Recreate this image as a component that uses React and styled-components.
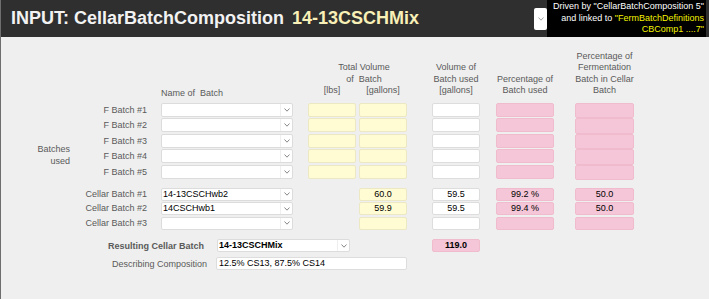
import React from "react";
import styled, { createGlobalStyle } from "styled-components";

const GlobalStyle = createGlobalStyle`
  html, body { margin: 0; padding: 0; background: #efefef; }
  body { font-family: "Liberation Sans", Arial, sans-serif; }
  * { box-sizing: border-box; }
`;

const Page = styled.div`
  width: 709px;
  height: 299px;
  border-left: 1px solid #6e6e6e;
  background: #efefef;
  overflow: hidden;
`;

const Header = styled.header`
  display: flex;
  align-items: center;
  height: 37px;
  background: #2f2f2f;
  padding-left: 10px;
`;

const Title = styled.h1`
  margin: 0;
  font-size: 18px;
  font-weight: bold;
  color: #f2f2f2;
  white-space: nowrap;
`;

const TitleValue = styled.span`
  margin-left: 8px;
  color: #f8f0b6;
`;

const HeaderSelect = styled.div`
  margin-left: auto;
  width: 13px;
  height: 22px;
  background: #fff;
  border-radius: 2px;
  display: flex;
  align-items: center;
  justify-content: center;
`;

const InfoBox = styled.div`
  align-self: stretch;
  width: 159px;
  margin-right: 3px;
  background: #000;
  color: #fff;
  font-size: 9px;
  line-height: 11.6px;
  text-align: right;
  padding: 1px 2px 0 0;
  white-space: nowrap;
`;

const Yellow = styled.span`
  color: #f4f400;
`;

const Body = styled.main`
  padding-top: 14px;
`;

const cols = `73px 146px 63px 51px 73px 74px 80px`;

const Section = styled.div`
  display: flex;
  margin-top: ${(p) => p.$mt || 0}px;
`;

const GroupLabel = styled.div`
  width: 73px;
  flex: none;
  padding-top: ${(p) => p.$pt || 0}px;
  padding-right: 4px;
  text-align: right;
  font-size: 9px;
  line-height: 11.7px;
  color: #5a5a5a;
`;

const Rows = styled.div`
  display: flex;
  flex-direction: column;
`;

const Row = styled.div`
  display: grid;
  grid-template-columns: ${cols};
  height: ${(p) => p.$h}px;
  align-items: start;
`;

const HeadRow = styled.div`
  display: grid;
  grid-template-columns: ${cols};
  height: 45.3px;
  align-items: end;
`;

const RowLabel = styled.div`
  grid-column: ${(p) => p.$col || 1};
  text-align: right;
  font-size: 9px;
  line-height: ${(p) => p.$lh}px;
  color: #5a5a5a;
  white-space: nowrap;
`;

const NameHead = styled.div`
  grid-column: 2;
  padding-left: 14px;
  margin-bottom: -3px;
  font-size: 9px;
  line-height: 11.3px;
  color: #5a5a5a;
  white-space: pre;
`;

const Head = styled.div`
  grid-column: ${(p) => p.$col};
  justify-self: end;
  width: ${(p) => p.$w}px;
  display: flex;
  flex-direction: column;
  align-items: center;
  font-size: 9px;
  line-height: 11.3px;
  color: #5a5a5a;
  white-space: pre;
`;

const TotalHead = styled.div`
  grid-column: 3 / span 2;
  display: grid;
  grid-template-columns: 63px 51px;
  font-size: 9px;
  line-height: 11.3px;
  color: #5a5a5a;
  white-space: pre;
`;

const TotalTop = styled.div`
  grid-column: 1 / span 2;
  padding-left: 28px;
  display: flex;
  flex-direction: column;
  align-items: center;
`;

const UnitHead = styled.div`
  justify-self: end;
  width: 48px;
  text-align: center;
`;

const SelectBox = styled.div`
  grid-column: ${(p) => p.$col || "auto"};
  justify-self: end;
  display: flex;
  width: ${(p) => p.$w}px;
  height: ${(p) => p.$h}px;
  background: #fff;
  border: 1px solid #dcdcdc;
  border-radius: 2px;
  flex: none;
`;

const SelectText = styled.div`
  flex: 1;
  padding-left: 1px;
  font-size: 9px;
  line-height: ${(p) => p.$h - 2}px;
  color: #000;
  font-weight: ${(p) => (p.$bold ? "bold" : "normal")};
  white-space: nowrap;
  overflow: hidden;
`;

const SelectButton = styled.div`
  width: 12px;
  border-left: 1px solid #efefef;
  display: flex;
  align-items: center;
  justify-content: center;
`;

const fills = {
  yellow: "#fffcd3",
  white: "#ffffff",
  pink: "#f5c6d7",
};

const Cell = styled.div`
  grid-column: ${(p) => p.$col || "auto"};
  justify-self: end;
  width: ${(p) => p.$w}px;
  height: ${(p) => p.$h}px;
  margin-left: ${(p) => p.$ml || 0}px;
  background: ${(p) => fills[p.$fill]};
  border: 1px solid ${(p) => (p.$fill === "pink" ? "#f0bccd" : p.$fill === "yellow" ? "#ece8c4" : "#dddddd")};
  border-radius: 2px;
  font-size: 9px;
  line-height: ${(p) => p.$h - 2}px;
  text-align: center;
  color: #000;
  font-weight: ${(p) => (p.$bold ? "bold" : "normal")};
  white-space: nowrap;
  flex: none;
`;

const LineRow = styled.div`
  display: flex;
  align-items: center;
  margin-top: ${(p) => p.$mt}px;
  height: 13px;
`;

const LineLabel = styled.div`
  width: 206px;
  flex: none;
  padding-right: ${(p) => p.$pr || 0}px;
  text-align: right;
  font-size: 9px;
  font-weight: ${(p) => (p.$bold ? "bold" : "normal")};
  color: #5a5a5a;
  white-space: nowrap;
`;

const TextInput = styled.div`
  margin-left: 9px;
  width: 191px;
  height: 13px;
  background: #fff;
  border: 1px solid #dddddd;
  border-radius: 2px;
  padding-left: 2px;
  font-size: 9px;
  line-height: 11px;
  color: #000;
  white-space: nowrap;
`;

const Chevron = ({ color = "#7a7a7a" }) => (
  <svg width="6" height="4" viewBox="0 0 6 4">
    <polyline points="0.5,0.5 3,3.2 5.5,0.5" fill="none" stroke={color} strokeWidth="0.9" />
  </svg>
);

const Select = ({ value = "", w, h, col, bold }) => (
  <SelectBox $w={w} $h={h} $col={col}>
    <SelectText $h={h} $bold={bold}>{value}</SelectText>
    <SelectButton>
      <Chevron />
    </SelectButton>
  </SelectBox>
);

const fRows = ["F Batch #1", "F Batch #2", "F Batch #3", "F Batch #4", "F Batch #5"];
const cellarRows = [
  { label: "Cellar Batch #1", name: "14-13CSCHwb2", gal: "60.0", used: "59.5", pct: "99.2 %", ferm: "50.0" },
  { label: "Cellar Batch #2", name: "14CSCHwb1", gal: "59.9", used: "59.5", pct: "99.4 %", ferm: "50.0" },
  { label: "Cellar Batch #3", name: "", gal: "", used: "", pct: "", ferm: "" },
];

export default function App() {
  return (
    <>
      <GlobalStyle />
      <Page>
        <Header>
          <Title>
            INPUT: CellarBatchComposition<TitleValue>14-13CSCHMix</TitleValue>
          </Title>
          <HeaderSelect>
            <Chevron color="#9a9a9a" />
          </HeaderSelect>
          <InfoBox>
            <div>Driven by "CellarBatchComposition 5"</div>
            <div>
              and linked to <Yellow>"FermBatchDefinitions</Yellow>
            </div>
            <div>
              <Yellow>CBComp1 ....7"</Yellow>
            </div>
          </InfoBox>
        </Header>
        <Body>
          <Section>
            <GroupLabel />
            <HeadRow>
              <NameHead>Name of  Batch</NameHead>
              <TotalHead>
                <TotalTop>
                  <span>Total Volume</span>
                  <span>of  Batch</span>
                </TotalTop>
                <UnitHead>[lbs]</UnitHead>
                <UnitHead>[gallons]</UnitHead>
              </TotalHead>
              <Head $col={5} $w={48}>
                <span>Volume of</span>
                <span>Batch used</span>
                <span>[gallons]</span>
              </Head>
              <Head $col={6} $w={58}>
                <span>Percentage of</span>
                <span>Batch used</span>
              </Head>
              <Head $col={7} $w={59}>
                <span>Percentage of</span>
                <span>Fermentation</span>
                <span>Batch in Cellar</span>
                <span>Batch</span>
              </Head>
            </HeadRow>
          </Section>

          <Section $mt={6.4}>
            <GroupLabel $pt={41.5}>
              Batches
              <br />
              used
            </GroupLabel>
            <Rows>
              {fRows.map((label) => (
                <Row key={label} $h={15.5}>
                  <RowLabel $lh={14}>{label}</RowLabel>
                  <Select w={132} h={14} />
                  <Cell $fill="yellow" $w={48} $h={14} />
                  <Cell $fill="yellow" $w={48} $h={14} />
                  <Cell $fill="white" $w={48} $h={14} />
                  <Cell $fill="pink" $w={58} $h={14} />
                  <Cell $fill="pink" $w={59} $h={15.5} />
                </Row>
              ))}
            </Rows>
          </Section>

          <Section $mt={7.8}>
            <GroupLabel />
            <Rows>
              {cellarRows.map((r) => (
                <Row key={r.label} $h={14.5}>
                  <RowLabel $lh={13}>{r.label}</RowLabel>
                  <Select w={132} h={13} value={r.name} />
                  <Cell $col={4} $fill="yellow" $w={48} $h={13}>{r.gal}</Cell>
                  <Cell $fill="white" $w={48} $h={13}>{r.used}</Cell>
                  <Cell $fill="pink" $w={58} $h={13}>{r.pct}</Cell>
                  <Cell $fill="pink" $w={59} $h={13}>{r.ferm}</Cell>
                </Row>
              ))}
            </Rows>
          </Section>

          <LineRow $mt={8}>
            <LineLabel $bold $pr={3}>Resulting Cellar Batch</LineLabel>
            <SelectBox $w={133} $h={13} style={{ marginLeft: 10 }}>
              <SelectText $h={13} $bold>14-13CSCHMix</SelectText>
              <SelectButton>
                <Chevron />
              </SelectButton>
            </SelectBox>
            <Cell $fill="pink" $w={48} $h={13} $ml={82} $bold>119.0</Cell>
          </LineRow>
          <LineRow $mt={5}>
            <LineLabel>Describing Composition</LineLabel>
            <TextInput>12.5% CS13, 87.5% CS14</TextInput>
          </LineRow>
        </Body>
      </Page>
    </>
  );
}
